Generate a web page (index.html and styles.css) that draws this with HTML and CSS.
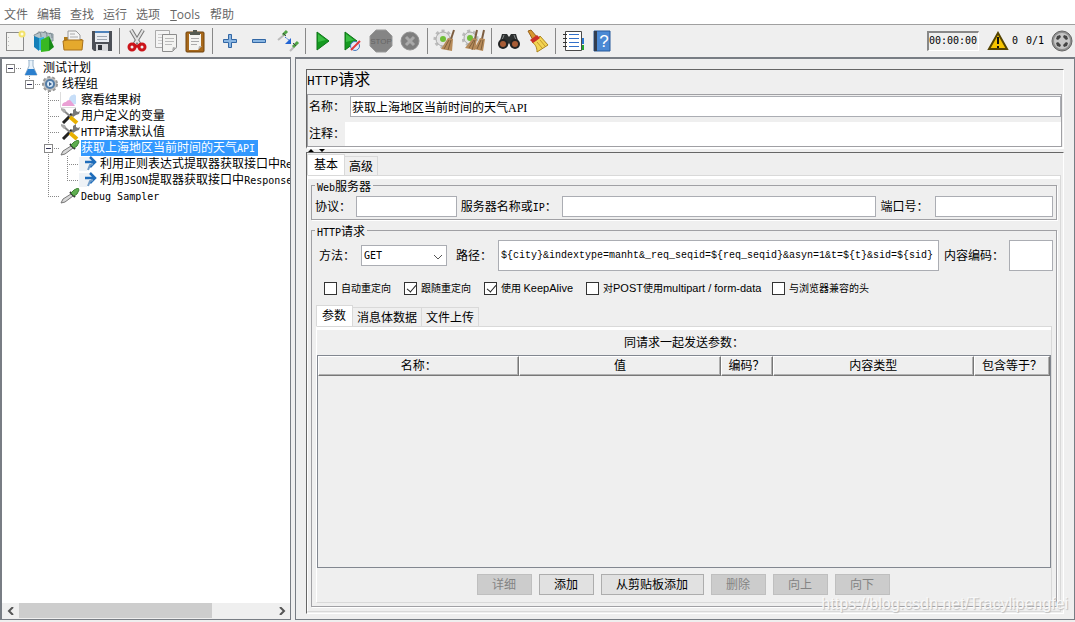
FILE: index.html
```html
<!DOCTYPE html>
<html lang="zh-CN">
<head>
<meta charset="utf-8">
<title>HTTP请求</title>
<link rel="stylesheet" href="styles.css">
</head>
<body>
<svg class="defs" aria-hidden="true">
  <symbol id="tools" viewBox="0 0 20 16"><path d="m3 15 9-9" stroke="#222" stroke-width="3"/><path d="m11 7 2-2V2l3-2v3l2 1 2-1-1 3-3 1-3 2z" fill="#777"/><path d="m3 2 8 7" stroke="#888" stroke-width="2"/><path d="m10 9 7 6" stroke="#e8b000" stroke-width="4"/><path d="m1 0 4 1 1 2-2 2-3-3z" fill="#aaa"/></symbol>
  <symbol id="pipette" viewBox="0 0 20 16"><path d="m1 15 2-4 8-5 2 2-8 6z" fill="#d8d8d8" stroke="#777"/><path d="m10 4 5 5" stroke="#333" stroke-width="2"/><path d="m11 5 3-3 4-2 1 2-2 4-3 2z" fill="#5fae50" stroke="#3c8232"/></symbol>
  <symbol id="arrow" viewBox="0 0 20 16"><path d="M0 1h13L8 15H0z" fill="#eef2f6"/><path d="M6 6h9M11 1l5 5-5 5" fill="none" stroke="#1f6dbb" stroke-width="2.500"/><path d="m9 14 2-5 3-1" fill="none" stroke="#6f9cc9" stroke-width="2"/></symbol>
</svg>
<nav class="menu">
  <button>文件</button><button>编辑</button><button>查找</button><button>运行</button><button>选项</button><button><u>T</u>ools</button><button>帮助</button>
</nav>
<header class="toolbar">
  <button class="tool" aria-label="新建"><svg viewBox="0 0 24 24"><rect x="3.500" y="3.500" width="17" height="18" fill="#f3f3f1" stroke="#8b8b8b"/><path d="M5.500 8v11" stroke="#bbb" stroke-dasharray="1 3"/><circle cx="19" cy="5" r="2.500" fill="#fffbe0" stroke="#f2e26b" stroke-width="2"/></svg></button>
  <button class="tool" aria-label="模板"><svg viewBox="0 0 24 24"><path d="M2 6 9 3l12 2v7H4z" fill="#b4c2c8" stroke="#87969e"/><path d="M5 5c2-4 4-2 4 3m2-4c2-3 4-2 4 4m2-3c2-2 3 0 3 4" fill="none" stroke="#7a8990"/><path d="m2 7 5 2v13l-5-4z" fill="#147fb8"/><path d="m7 9 5-1v14l-5-1z" fill="#35b0dd"/><path d="m9 11 8-4v15l-8 1z" fill="#38b822"/><path d="m17 7 5 11-5 4z" fill="#168b16"/></svg></button>
  <button class="tool" aria-label="打开"><svg viewBox="0 0 24 24"><path d="M3 11V8h4l2 2h12v10H3z" fill="#b07a18"/><path d="M7 2h8l4 4v7H7z" fill="#f5f5f5" stroke="#999"/><path d="M9 5h5M9 8h8" stroke="#aaa"/><path d="m2 12 4-1h16l-1 10H3z" fill="#e5a92d" stroke="#a8701a"/></svg></button>
  <button class="tool" aria-label="保存"><svg viewBox="0 0 24 24"><path d="M2 2h20v20H4l-2-2z" fill="#4c5057"/><path d="M5 2h14v11H5z" fill="#e9edf2"/><path d="M5 2h14v2H5z" fill="#4d83bc"/><path d="M7 7.500h10M7 10.500h10" stroke="#9ca5b0"/><path d="M6 15h12v7H6z" fill="#d7d9dc"/><path d="M8 16h4v5H8z" fill="#30343a"/></svg></button>
  <i class="sep"></i>
  <button class="tool" aria-label="剪切"><svg viewBox="0 0 24 24"><path d="m6 1 9 15M18 1 9 16" stroke="#777" stroke-width="4"/><path d="m6 1 9 15M18 1 9 16" stroke="#e2e2e2" stroke-width="2"/><g fill="#efefef" stroke="#cc151b" stroke-width="3"><ellipse cx="7" cy="18" rx="3" ry="3"/><ellipse cx="17" cy="18" rx="3" ry="3"/></g><path d="m9 14 3 2 3-2 1 2-4 3-4-3z" fill="#cc151b"/></svg></button>
  <button class="tool" aria-label="复制"><svg viewBox="0 0 24 24"><path d="M1.500 1.500h14v17h-14z" fill="#f4f4f4" stroke="#aaa"/><path d="M4 5.500h9M4 8.500h5M4 11.500h4M4 14.500h4" stroke="#ccc"/><path d="M8.500 5.500h14v13l-4 4h-10z" fill="#f3f3f1" stroke="#8c8c8c"/><path d="M11 9.500h9M11 12.500h9M11 15.500h7" stroke="#bbb"/><path d="m18 22 1-4 4 1z" fill="#aaa"/></svg></button>
  <button class="tool" aria-label="粘贴"><svg viewBox="0 0 24 24"><rect x="3" y="3" width="18" height="20" rx="1" fill="#a8691b" stroke="#70420b"/><path d="M6 5h12v12l-3 4H6z" fill="#f4f4f1"/><path d="M8 9.500h8M8 12.500h8M8 15.500h6" stroke="#aaa"/><path d="M7 6V3h3V1h4v2h3v3z" fill="#555a50"/><path d="m15 21 1-4h3z" fill="#bbb"/></svg></button>
  <i class="sep"></i>
  <button class="tool" aria-label="展开"><svg viewBox="0 0 24 24"><path d="M10.500 5.500h3v5h5v3h-5v5h-3v-5h-5v-3h5z" fill="#8ab6e2" stroke="#3267a5"/></svg></button>
  <button class="tool" aria-label="折叠"><svg viewBox="0 0 24 24"><path d="M5.500 10.500h13v3h-13z" fill="#8ab6e2" stroke="#3267a5"/></svg></button>
  <button class="tool" aria-label="切换"><svg viewBox="0 0 24 24"><path d="m2 11 6-5M14 22l4-4" stroke="#bbb" stroke-width="2"/><path d="m7 6 4-4M17 18l5-5" stroke="#4fa445" stroke-width="3"/><path d="m7 4 3 3M17 14l3 3" stroke="#444"/><path d="m9 8 5 4" stroke="#2b6dd7" stroke-dasharray="2 1"/><path d="m15 9v6H9z" fill="#2365d4"/></svg></button>
  <i class="sep"></i>
  <button class="tool" aria-label="启动"><svg viewBox="0 0 24 24"><path d="m6 3 12 9-12 9z" fill="#159a20" stroke="#0c7516"/><path d="m7 5 8 6-8 2z" fill="#3bbd43"/></svg></button>
  <button class="tool" aria-label="不停顿启动"><svg viewBox="0 0 24 24"><path d="m5 3 12 9-12 9z" fill="#159a20" stroke="#0c7516"/><path d="m6 5 8 6-8 2z" fill="#3bbd43"/><circle cx="15" cy="17" r="4.500" fill="#e4ebfa" stroke="#4477bd"/><path d="m11 21 9-9" stroke="#e23a3a" stroke-width="2"/></svg></button>
  <button class="tool" aria-label="停止" disabled><svg viewBox="0 0 24 24"><path d="M7 1h10l6 6v10l-6 6H7l-6-6V7z" fill="#858585" stroke="#999"/><text x="12" y="15" text-anchor="middle" class="stop">STOP</text></svg></button>
  <button class="tool" aria-label="关闭" disabled><svg viewBox="0 0 24 24"><circle cx="12" cy="12" r="9" fill="#7e7e7e" stroke="#939393"/><path d="m8 8 8 8m0-8-8 8" stroke="#a9a9a9" stroke-width="3"/></svg></button>
  <i class="sep"></i>
  <button class="tool" aria-label="清除"><svg viewBox="0 0 24 24"><circle cx="10" cy="10" r="8" fill="none" stroke="#bbb" stroke-width="3" stroke-dasharray="3 3"/><circle cx="10" cy="10" r="7" fill="#e4e4e4" stroke="#aaa"/><circle cx="10" cy="10" r="3" fill="#70bf38"/><path d="m21 1-3 9" stroke="#7c5d40" stroke-width="2"/><path d="m15 9 5 1-1 12-11-2z" fill="#b78b5a"/><path d="m16 11-5 9m7-9-3 10" stroke="#80603c"/></svg></button>
  <button class="tool" aria-label="清除全部"><svg viewBox="0 0 24 24"><circle cx="8" cy="9" r="7" fill="none" stroke="#bbb" stroke-width="3" stroke-dasharray="3 3"/><circle cx="8" cy="9" r="6" fill="#e4e4e4" stroke="#aaa"/><circle cx="8" cy="9" r="3" fill="#70bf38"/><path d="m15 1-2 9M22 1l-2 9" stroke="#7c5d40" stroke-width="2"/><path d="m11 9 4 1-2 11-10-2zM18 9l5 1-2 12-9-2z" fill="#b78b5a"/><path d="m12 11-5 8m6-8-3 10m9-10-4 9m6-9-2 10" stroke="#80603c"/></svg></button>
  <i class="sep"></i>
  <button class="tool" aria-label="搜索"><svg viewBox="0 0 24 24"><path d="M5 5h5l2 3 2-3h5l3 10-8 3-2-4-2 4-8-3z" fill="#2d3030"/><path d="M7 6 5 11M17 6l2 5" stroke="#868989"/><circle cx="6" cy="15" r="5" fill="#222"/><circle cx="18" cy="15" r="5" fill="#222"/><circle cx="6" cy="15" r="3" fill="#a85c35"/><circle cx="18" cy="15" r="3" fill="#a85c35"/></svg></button>
  <button class="tool" aria-label="重置搜索"><svg viewBox="0 0 24 24"><path d="m2 2 3-1 6 7-4 3z" fill="#d89730" stroke="#97611c"/><path d="M6 13c4-1 6-3 8-6l8 9-11 7c0-4-1-7-5-10z" fill="#f3d452" stroke="#ad841e"/><path d="m4 11 7-5 3 3-7 5z" fill="#cb3029"/><path d="m11 13 5 6m-2-8 5 6" stroke="#c49a2e"/></svg></button>
  <i class="sep"></i>
  <button class="tool" aria-label="函数助手"><svg viewBox="0 0 24 24"><path d="M19 9h4v6h-4z" fill="#2976d0"/><path d="M19 16h4v5h-4z" fill="#21a52d"/><path d="M4.500 2.500h16v19h-16z" fill="#fff" stroke="#4a4a4a"/><path d="M8 5.500h10M8 9.500h10M8 13.500h10M8 17.500h10" stroke="#3270c9"/><path d="M2 5.500h4M2 9.500h4M2 13.500h4M2 17.500h4" stroke="#333"/></svg></button>
  <button class="tool" aria-label="帮助"><svg viewBox="0 0 24 24"><path d="M4 2h16v20H4z" fill="#4b89d4" stroke="#285b9c"/><path d="M4 2h3v20H4z" fill="#333e50"/><text x="14" y="18" text-anchor="middle" class="question">?</text></svg></button>
  <div class="status">
    <output class="clock">00:00:00</output>
    <svg class="warning" viewBox="0 0 22 20"><path d="m11 2 9 16H2z" fill="#f5c400" stroke="#554400" stroke-width="2"/><path d="M11 6v7m0 2v2" stroke="#111" stroke-width="2"/></svg>
    <span>0</span><span class="threads">0/1</span>
    <svg class="globe" viewBox="0 0 22 22"><circle cx="11" cy="11" r="10" fill="#8f8f8f" stroke="#666"/><circle cx="11" cy="11" r="8" fill="#c6c6c6"/><path d="m5 9 1-3 3-1 1 2-3 3zM13 5l3 1 1 3-2 1-3-3zM5 13l2-1 3 3-1 2-3-1zM17 13l-1 3-3 1-1-2 3-3z" fill="#444"/></svg>
  </div>
</header>
<main>
  <aside class="tree-panel">
    <div class="tree">
      <ul class="root">
        <li><div class="node"><button class="toggle" aria-label="折叠"></button><svg viewBox="0 0 20 16"><path d="M6 0h6M7 0v6l-4 9h12l-4-9V0" fill="#e8f2fa" stroke="#9ab4cb"/><path d="m6 9-3 6h12l-3-6z" fill="#2b7fce"/></svg><span>测试计划</span></div>
          <ul class="single">
            <li><div class="node"><button class="toggle" aria-label="折叠"></button><svg viewBox="0 0 20 16"><circle cx="9" cy="8" r="7" fill="#ccc" stroke="#999" stroke-width="2" stroke-dasharray="3 2"/><circle cx="9" cy="8" r="6" fill="#bbb"/><circle cx="9" cy="8" r="5" fill="#517ca8"/><circle cx="9" cy="8" r="3" fill="#d8e8f6"/><path d="m8 6 3 2-3 2z" fill="#345c8b"/></svg><span>线程组</span></div>
              <ul>
                <li><div class="node leaf"><svg viewBox="0 0 20 16"><path d="M.5 0v15.500H16" fill="none" stroke="#ddd"/><path d="M9 8c0-3 2-5 4-5 1-1 3 0 3 1v8l-5 1z" fill="#c7def8"/><path d="M2 14c0-3 2-4 4-4 1-2 4-3 5-1l4 5z" fill="#eaa0d4"/></svg><span>察看结果树</span></div></li>
                <li><div class="node leaf"><svg><use href="#tools"/></svg><span>用户定义的变量</span></div></li>
                <li><div class="node leaf"><svg><use href="#tools"/></svg><span><b class="latin">HTTP</b>请求默认值</span></div></li>
                <li><div class="node"><button class="toggle" aria-label="折叠"></button><svg><use href="#pipette"/></svg><span class="selected">获取上海地区当前时间的天气<b class="latin">API</b></span></div>
                  <ul>
                    <li><div class="node leaf"><svg><use href="#arrow"/></svg><span class="clip">利用正则表达式提取器获取接口中<b class="latin">Response</b></span></div></li>
                    <li><div class="node leaf"><svg><use href="#arrow"/></svg><span class="clip">利用<b class="latin">JSON</b>提取器获取接口中<b class="latin">Response</b></span></div></li>
                  </ul>
                </li>
                <li><div class="node leaf"><svg><use href="#pipette"/></svg><span><b class="latin">Debug Sampler</b></span></div></li>
              </ul>
            </li>
          </ul>
        </li>
      </ul>
    </div>
    <div class="scrollbar">
      <button aria-label="向左"><svg viewBox="0 0 8 8"><path d="M6 0 2 4l4 4" fill="none" stroke="#555" stroke-width="2"/></svg></button>
      <div class="track"><div class="thumb"></div></div>
      <button aria-label="向右"><svg viewBox="0 0 8 8"><path d="m2 0 4 4-4 4" fill="none" stroke="#555" stroke-width="2"/></svg></button>
    </div>
  </aside>
  <section class="editor">
    <div class="heading">
      <h1><b class="latin-large">HTTP</b>请求</h1>
      <div class="naming">
        <div class="name-row"><label for="name">名称：</label><input id="name" value="获取上海地区当前时间的天气API"></div>
        <div class="note-row"><label for="note">注释：</label><input id="note"></div>
      </div>
    </div>
    <div class="splitter"><svg viewBox="0 0 20 3"><path d="m2 3 3-3 3 3zM13 0h6l-3 3z"/></svg></div>
    <div class="config">
      <div class="tabs" role="tablist"><button role="tab" aria-selected="true">基本</button><button role="tab">高级</button></div>
      <div class="tab-panel outer">
        <fieldset>
          <legend><b class="latin">Web</b>服务器</legend>
          <div class="server-row">
            <label for="protocol">协议：</label><input id="protocol">
            <label for="server">服务器名称或<b class="latin">IP</b>：</label><input id="server">
            <label for="port">端口号：</label><input id="port">
          </div>
        </fieldset>
        <fieldset class="request">
          <legend><b class="latin">HTTP</b>请求</legend>
          <div class="request-body">
            <div class="path-row">
              <label for="method">方法：</label>
              <div class="select"><select id="method"><option>GET</option></select><svg viewBox="0 0 10 6"><path d="m1 1 4 4 4-4" fill="none" stroke="#555"/></svg></div>
              <label for="path">路径：</label><input id="path" value="${city}&amp;indextype=manht&amp;_req_seqid=${req_seqid}&amp;asyn=1&amp;t=${t}&amp;sid=${sid}">
              <label for="encoding">内容编码：</label><input id="encoding">
            </div>
            <div class="checks">
              <label><input type="checkbox">自动重定向</label>
              <label><input type="checkbox" checked>跟随重定向</label>
              <label><input type="checkbox" checked><span>使用 <b>KeepAlive</b></span></label>
              <label><input type="checkbox"><span>对<b>POST</b>使用<b>multipart / form-data</b></span></label>
              <label><input type="checkbox">与浏览器兼容的头</label>
            </div>
            <div class="tabs" role="tablist"><button role="tab" aria-selected="true">参数</button><button role="tab">消息体数据</button><button role="tab">文件上传</button></div>
            <div class="tab-panel inner">
              <div class="caption">同请求一起发送参数：</div>
              <div class="table-box">
                <table>
                  <colgroup><col class="wide"><col class="wide"><col class="narrow"><col class="wide"><col></colgroup>
                  <thead><tr><th>名称：</th><th>值</th><th>编码？</th><th>内容类型</th><th>包含等于？</th></tr></thead>
                </table>
              </div>
              <div class="actions"><button disabled>详细</button><button>添加</button><button class="long">从剪贴板添加</button><button disabled>删除</button><button disabled>向上</button><button disabled>向下</button></div>
            </div>
          </div>
        </fieldset>
      </div>
    </div>
    <div class="watermark">https://blog.csdn.net/Tracylipengfei</div>
  </section>
</main>
</body>
</html>
```
FILE: styles.css
```css
* { box-sizing: border-box; }
body {
  margin: 0;
  height: 100vh;
  display: flex;
  flex-direction: column;
  background: #efefef;
  color: #000;
  font: 12px/16px "Liberation Serif", "Noto Sans CJK SC", sans-serif;
}
button, input, select { font: inherit; color: inherit; margin: 0; padding: 0; border-radius: 0; }
button { border: 0; background: none; }
ul { list-style: none; margin: 0; padding: 0; }
svg { display: block; flex: none; }
.defs { position: absolute; width: 0; height: 0; }
.latin { font: 10px/12px "DejaVu Sans Mono", monospace; }
.latin-large { font: 13px/16px "Liberation Mono", monospace; }

.menu {
  flex: none;
  height: 25px;
  display: flex;
  align-items: center;
  gap: 9px;
  padding: 6px 4px 0;
  background: #fff;
  border-bottom: 1px solid #a0a0a0;
  font-family: "Open Sans", "Noto Sans CJK SC", sans-serif;
  color: #666;
}
.menu button { min-width: 24px; }
.menu button:nth-child(6) { min-width: 32px; }

.toolbar {
  flex: none;
  height: 32px;
  display: flex;
  align-items: center;
  gap: 5px;
  padding-left: 3px;
}
.tool { width: 24px; height: 24px; flex: none; }
.tool svg { width: 24px; height: 24px; }
.sep { width: 1px; height: 26px; background: #888; }
.stop { font: 8px "Liberation Sans", sans-serif; fill: #666; }
.question { font: 17px "Liberation Sans", sans-serif; fill: #fff; }
.status {
  margin-left: auto;
  display: flex;
  align-items: center;
  gap: 8px;
  padding-right: 2px;
  font: 10px/16px "DejaVu Sans Mono", monospace;
}
.clock {
  width: 52px;
  height: 20px;
  border: 1px solid #fff;
  border-top: 2px solid #888;
  border-left: 2px solid #888;
}
.warning { width: 22px; height: 20px; margin-right: -5px; }
.threads { margin-right: -1px; }
.globe { width: 22px; height: 22px; }

main { flex: 1; min-height: 0; display: flex; gap: 4px; padding-bottom: 2px; }
.tree-panel {
  flex: 0 0 291px;
  min-width: 0;
  display: flex;
  flex-direction: column;
  border: solid #787d84;
  border-width: 2px 1px 1px 2px;
  background: #fff;
}
.tree { flex: 1; overflow: hidden; white-space: nowrap; padding: 1px 0 0 2px; }
.tree ul ul {
  margin-left: 19px;
  background: repeating-linear-gradient(#888 0 1px, transparent 1px 2px) 6px 0 / 1px calc(100% - 8px) no-repeat;
}
.tree .single { background-size: 1px 8px; }
.node {
  display: flex;
  align-items: center;
  height: 16px;
  background: repeating-linear-gradient(90deg, #888 0 1px, transparent 1px 2px) 6px 8px / 12px 1px no-repeat;
}
.node svg { width: 20px; height: 16px; margin-right: 1px; }
.node span { line-height: 16px; }
.node .clip { min-width: 0; overflow: hidden; }
.leaf { padding-left: 18px; }
.toggle {
  width: 9px;
  height: 9px;
  margin: 0 7px 0 2px;
  border: 1px solid #888;
  background: linear-gradient(#335, #335) center / 5px 1px no-repeat #fff;
}
.selected { background: #3399ff; color: #fff; padding-right: 3px; }
.scrollbar { flex: none; height: 16px; display: flex; background: #efefef; }
.scrollbar button { width: 17px; display: grid; place-items: center; }
.scrollbar svg { width: 8px; height: 8px; }
.track { flex: 1; }
.thumb { width: 76%; height: 15px; background: #cdcdcd; }

.editor {
  position: relative;
  flex: 1;
  min-width: 0;
  display: flex;
  flex-direction: column;
  border: solid #787d84;
  border-width: 2px 1px 1px;
  padding: 10px 10px 5px;
}
.heading {
  flex: none;
  border: solid #fff;
  border-width: 1px 1px 2px;
  border-top-color: #666;
  border-left-color: #666;
}
h1 { margin: 0; font-size: 16px; font-weight: 400; line-height: 20px; height: 24px; }
.naming { margin-right: 1px; border: 1px solid #a0a0a4; padding-top: 1px; }
.naming > div { display: flex; align-items: center; padding-left: 1px; }
.name-row label { width: 41px; }
.name-row { height: 21px; }
.note-row { height: 24px; margin-top: 5px; }
.note-row label { width: 36px; }
.naming input, .server-row input, .path-row input {
  min-width: 0;
  background: #fff;
  border: 1px solid #abadb3;
  outline: 0;
}
.naming input { flex: 1; height: 21px; padding: 0 1px; }
.naming .note-row input { border: 0; height: 24px; }
.splitter { flex: none; height: 3px; }
.splitter svg { width: 20px; height: 3px; }

.config {
  flex: 1;
  min-height: 0;
  display: flex;
  flex-direction: column;
  border: 1px solid #fff;
  border-top-color: #666;
  border-left-color: #666;
  padding: 1px 2px 1px 0;
}
.tabs { display: flex; align-items: flex-end; flex: none; }
.tabs button {
  height: 19px;
  padding: 2px 4px 0;
  border: 1px solid #d9d9d9;
  border-width: 1px 1px 0 0;
  line-height: 16px;
}
.tabs [aria-selected] { height: 21px; padding: 0 6px; border-left-width: 1px; background: #fff; }
.request .tabs [aria-selected] { padding: 0 6px 0 5px; }
.tab-panel {
  flex: 1;
  min-height: 0;
  display: flex;
  flex-direction: column;
  border: 1px solid #d9d9d9;
  border-left-color: #fff;
}
.tab-panel::before { content: ""; flex: none; height: 3px; background: #fff; }
.outer { padding: 0 3px 4px; }
.outer::before { margin: 0 -3px; }
fieldset {
  min-width: 0;
  margin: 0;
  padding: 0 3px 2px;
  border: 1px solid #a0a0a4;
  box-shadow: 1px 1px 0 #fff;
}
legend { height: 13px; padding: 1px 2px 0; line-height: 15px; }
.server-row { display: flex; align-items: center; padding-top: 4px; }
.server-row label { flex: none; }
.server-row input { height: 21px; }
#protocol { flex: 100 1 0; margin: 0 4px 0 5px; }
#server { flex: 316 1 0; margin: 0 5px; }
#port { flex: 118 1 0; margin-left: 6px; }
.request { flex: 1; min-height: 0; margin-top: 4px; padding-bottom: 3px; }
.request-body { height: 100%; display: flex; flex-direction: column; padding-top: 3px; }
.path-row { flex: none; display: flex; align-items: center; padding-left: 4px; }
.path-row label { flex: none; }
.path-row input { height: 31px; }
.select { position: relative; width: 86px; margin: 0 9px 0 6px; }
.select select {
  display: block;
  width: 100%;
  height: 21px;
  padding-left: 2px;
  appearance: none;
  border: 1px solid #abadb3;
  background: #fff;
  font: 10px/16px "DejaVu Sans Mono", monospace;
}
.select svg { position: absolute; right: 4px; top: 9px; width: 10px; height: 6px; pointer-events: none; }
#path { flex: 1; margin: 0 5px 0 6px; padding-left: 2px; font: 10px/20px "Liberation Mono", monospace; }
#encoding { width: 44px; margin-left: 5px; }
.checks {
  flex: none;
  display: grid;
  grid-template-columns: 80px 80px 102px 186px auto;
  align-items: center;
  height: 14px;
  margin: 10px 0 10px 9px;
  font-size: 10px;
  line-height: 14px;
}
.checks label { display: flex; align-items: center; white-space: nowrap; }
.checks b { font: 11px/14px "Liberation Sans", sans-serif; }
.checks input {
  appearance: none;
  flex: none;
  width: 13px;
  height: 13px;
  margin-right: 4px;
  border: 1px solid #333;
  background: #fff;
}
.checks input:checked::before {
  content: "";
  display: block;
  width: 4px;
  height: 8px;
  margin: 0 0 0 4px;
  border: solid #222;
  border-width: 0 1px 1px 0;
  transform: rotate(40deg);
}
.request .tabs, .inner { margin-left: 1px; }
.inner { margin-right: 1px; }
.caption { flex: none; height: 25px; line-height: 26px; text-align: center; }
.table-box { flex: 1; min-height: 0; border: 1px solid #828790; }
table { width: 100%; table-layout: fixed; border-collapse: separate; border-spacing: 0; }
.wide { width: 27.5%; }
.narrow { width: 7.1%; }
th {
  height: 20px;
  padding: 0;
  font-weight: 400;
  line-height: 16px;
  border: 1px solid #777;
  border-top-color: #fff;
  border-left-color: #fff;
  box-shadow: inset -1px -1px 0 #b0b0b0;
}
.actions { flex: none; display: flex; justify-content: center; gap: 7px; padding: 6px 2px 7px 0; }
.actions button { width: 55px; height: 21px; border: 1px solid #adadad; background: #e1e1e1; }
.actions .long { width: 103px; }
.actions button:disabled { background: #ccc; border-color: #bfbfbf; color: #838383; }
.watermark {
  position: absolute;
  right: 6px;
  bottom: 6px;
  color: #f8f8f8;
  text-shadow: 1px 1px 1px #bbb;
  font: 16px/18px "Liberation Sans", sans-serif;
  pointer-events: none;
}
```
